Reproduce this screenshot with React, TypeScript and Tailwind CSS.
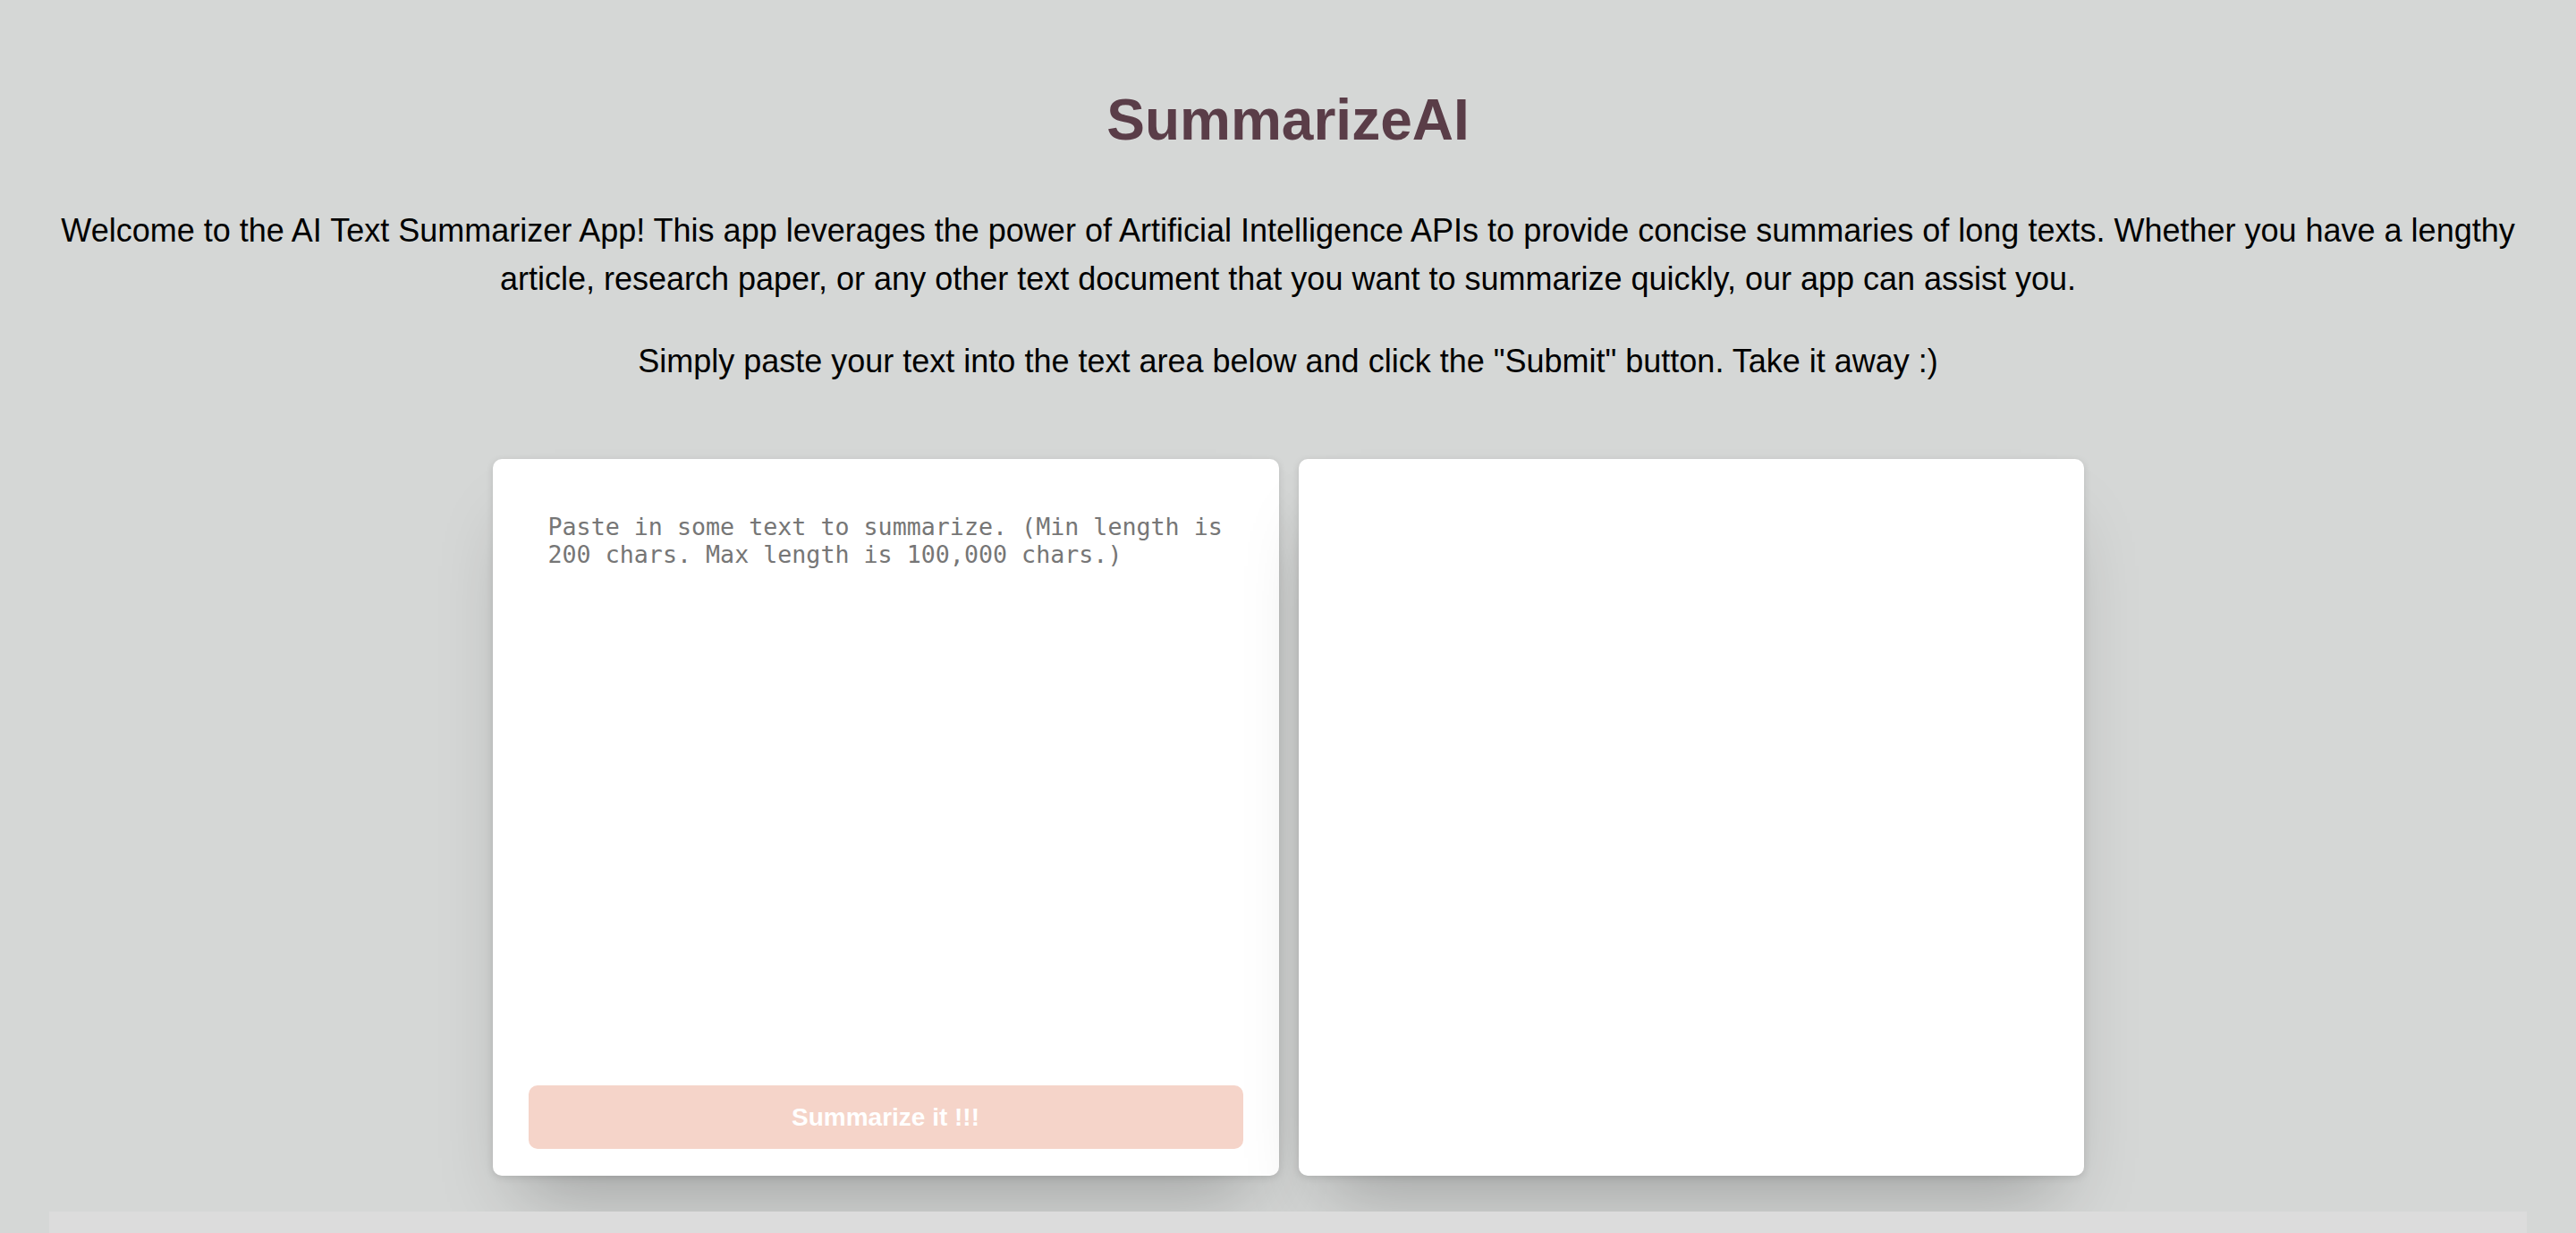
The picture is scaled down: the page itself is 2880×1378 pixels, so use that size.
import { useState } from "react";

export default function App() {
    const [text, setText] = useState("");

    return (
        <div className="h-screen overflow-hidden bg-[#d5d7d6] font-['Liberation_Sans',Arial,sans-serif] text-black flex flex-col">
            {/* Encabezado */}
            <div className="px-10 pt-[98px] text-center">
                <h1 className="text-[64px] leading-[73px] font-bold text-[#5a3d48]">SummarizeAI</h1>
                <p className="mt-[60px] text-[36px] leading-[54px]">
                    Welcome to the AI Text Summarizer App! This app leverages the power of Artificial Intelligence APIs to
                    provide concise summaries of long texts. Whether you have a lengthy article, research paper, or any
                    other text document that you want to summarize quickly, our app can assist you.
                </p>
                <p className="mt-[38px] text-[36px] leading-[54px]">
                    Simply paste your text into the text area below and click the "Submit" button. Take it away :)
                </p>
            </div>

            {/* Paneles */}
            <div className="mt-[82px] flex justify-center gap-[22px]">
                <div className="w-[879px] h-[801px] bg-white rounded-[10px] px-10 pt-10 pb-[30px] flex flex-col shadow-[0_2px_8px_rgba(0,0,0,0.12),0_50px_80px_-30px_rgba(0,0,0,0.25)]">
                    <textarea
                        value={text}
                        onChange={(e) => setText(e.target.value)}
                        placeholder="Paste in some text to summarize. (Min length is 200 chars. Max length is 100,000 chars.)"
                        className="flex-1 resize-none outline-none px-[22px] pt-5 text-[26.67px] leading-[31px] font-['DejaVu_Sans_Mono',monospace] text-[#333] placeholder:text-[#767676]"
                    />
                    <button
                        disabled={text.length < 200}
                        className="mt-[20px] h-[71px] w-full rounded-[10px] bg-[#f5d4c9] text-white text-[28px] font-bold"
                    >
                        Summarize it !!!
                    </button>
                </div>
                <div className="w-[878px] h-[801px] bg-white rounded-[10px] shadow-[0_2px_8px_rgba(0,0,0,0.12),0_50px_80px_-30px_rgba(0,0,0,0.25)]" />
            </div>

            <div className="mt-10 mx-[55px] flex-1 bg-[#dcdcdc]" />
        </div>
    );
}
